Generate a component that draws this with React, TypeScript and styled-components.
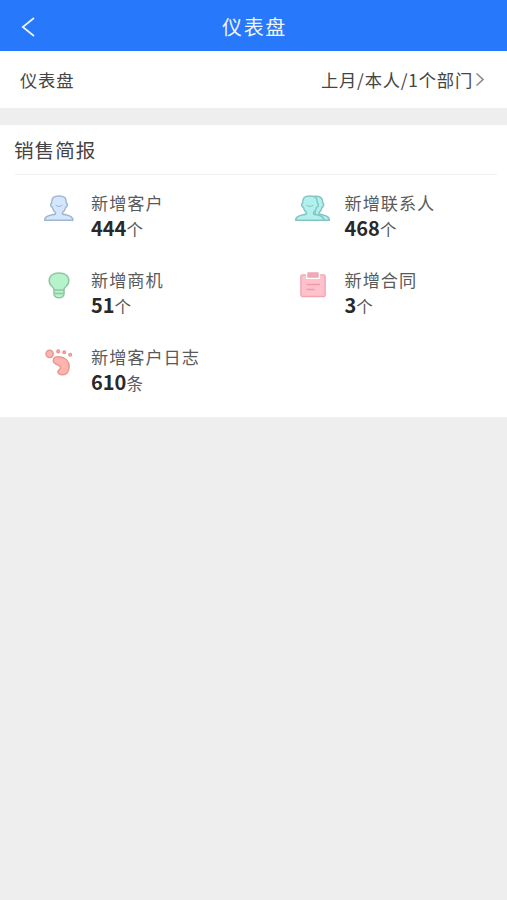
import React from 'react';
import styled, { createGlobalStyle } from 'styled-components';

const GlobalStyle = createGlobalStyle`
  * { box-sizing: border-box; }
  body {
    margin: 0;
    background: #eeeeee;
    color: #444;
    font-family: "Noto Sans CJK SC", sans-serif;
  }
  svg { display: block; }
`;

const Page = styled.div`
  min-height: 900px;
  background: #eeeeee;
`;

const Header = styled.header`
  display: grid;
  grid-template-columns: 60px 1fr 60px;
  align-items: center;
  height: 51px;
  padding-top: 3px;
  background: #2878fb;
  color: #eef5ff;
`;

const BackButton = styled.button`
  width: 40px;
  padding: 0 0 0 20px;
  border: 0;
  background: none;
  color: inherit;
`;

const Title = styled.h1`
  margin: 0;
  font-size: 20px;
  line-height: 28px;
  font-weight: 400;
  letter-spacing: 1.6px;
  text-align: center;
  padding-left: 2px;
`;

const FilterBar = styled.div`
  display: flex;
  align-items: center;
  justify-content: space-between;
  height: 57px;
  padding: 0 22px 0 20px;
  background: #fff;
  font-size: 17.3px;
  line-height: 26px;
  letter-spacing: 0.8px;
`;

const FilterValue = styled.div`
  display: flex;
  align-items: center;
  gap: 2px;
`;

const Card = styled.section`
  height: 292px;
  margin-top: 17px;
  background: #fff;
`;

const CardTitle = styled.h2`
  height: 50px;
  margin: 0 10px 0 15px;
  border-bottom: 1px solid #f0f0f0;
  font-size: 19.6px;
  line-height: 49px;
  font-weight: 400;
  letter-spacing: 1px;
  text-indent: -1px;
`;

const Grid = styled.div`
  display: grid;
  grid-template-columns: 253.5px 253.5px;
  grid-auto-rows: 76.8px;
  padding-top: 15px;
`;

const Item = styled.div`
  display: grid;
  grid-template-columns: 91px 1fr;
`;

const IconBox = styled.div<{ $left: number }>`
  padding: 4px 0 0 ${(p) => p.$left}px;
`;

const Label = styled.div`
  font-size: 17.2px;
  line-height: 26px;
  letter-spacing: 0.95px;
  color: #5a5a5a;
  white-space: nowrap;
`;

const Value = styled.div`
  font-size: 16.5px;
  line-height: 23.5px;
  color: #5a5a5a;
`;

const Amount = styled.b`
  font-size: 20px;
  font-weight: 700;
  color: #292929;
`;

const bustPath =
  'M8.6 9C8.6 3.6 10.4 2 16 2C21.6 2 23.4 3.6 23.4 9C25 9.3 24.6 13 22.6 13.3C22 16 21 17.5 19.6 18.3V20C22 21.3 30 20.8 30 26.3H1.6C1.6 20.8 10 21.3 12.4 20V18.3C11 17.5 10 16 9.4 13.3C7.4 13 7 9.3 8.6 9Z';

const CustomerIcon = () => (
  <svg width="32" height="28" viewBox="0 0 32 28" fill="#d4e6fb" stroke="#a0b6d3" strokeWidth="1.5" strokeLinejoin="round">
    <path d={bustPath} />
    <path d="M12.6 11.3Q16 13.8 19.4 11.3" fill="none" strokeWidth="1" />
  </svg>
);

const ContactIcon = () => (
  <svg width="37" height="28" viewBox="0 0 37 28" fill="#b2f0ed" stroke="#84c5c2" strokeWidth="1.5" strokeLinejoin="round">
    <path d="M19 2.6C25 1.2 28.8 3 28.8 9C30.2 9.4 29.8 13 28 13.3C27.4 16 26.4 17.5 25.2 18.3V20C27.6 21.3 35.4 20.8 35.4 26.3H22Z" />
    <path d={bustPath} />
    <path d="M12.6 11.3Q16 13.8 19.4 11.3" fill="none" strokeWidth="1" />
  </svg>
);

const BulbIcon = () => (
  <svg width="22" height="28" viewBox="0 0 22 28" fill="#b5f3ca" stroke="#92c5a4" strokeWidth="1.6" strokeLinejoin="round">
    <path d="M6 18.3Q5.8 16.9 3.5 15Q1.2 13 1.2 10C1.2 5 5 2 11 2S20.8 5 20.8 10Q20.8 13 18.5 15Q16.2 16.9 16 18.3V23Q15.5 26.8 11 26.8Q6.5 26.8 6 23Z" />
    <path d="M6 19H16M7 22.5H15" fill="none" strokeWidth="1.3" />
  </svg>
);

const ContractIcon = () => (
  <svg width="26" height="28" viewBox="0 0 26 28" fill="#ffc2cd" stroke="#efa6b2" strokeWidth="1.4" strokeLinejoin="round">
    <rect x=".9" y="3.9" width="24.2" height="21.6" rx="1.5" />
    <path d="M7 2H19V7H7Z" fill="#f4aab6" stroke="#fff" strokeWidth="2.2" />
    <path d="M8 2H18V6H8Z" fill="#f4aab6" />
    <path d="M6.5 13.5H20M6.5 18.5H14.5" fill="none" stroke="#ea9caa" strokeWidth="1.4" />
  </svg>
);

const FootIcon = () => (
  <svg width="28" height="29" viewBox="0 0 28 29" fill="#ffb4ae" stroke="#ea9792" strokeWidth="1.5">
    <circle cx="4.6" cy="5.8" r="3.6" />
    <circle cx="13.2" cy="3.4" r="1.3" />
    <circle cx="19.2" cy="4.2" r="1.3" />
    <circle cx="25.2" cy="6.8" r="1.3" />
    <path d="M8.3 12.4C8.3 9.5 11 8.2 14.3 8.8C20.5 9.5 24.3 13.3 24.2 18.6C24 24.2 21.2 27.2 17 26.7Q12.6 26.2 13 23.5C13.3 21.8 16.3 21.5 15.5 19C14.6 16.6 8.4 16.6 8.3 12.4Z" />
  </svg>
);

const items = [
  { label: '新增客户', amount: '444', unit: '个', left: 43, icon: <CustomerIcon /> },
  { label: '新增联系人', amount: '468', unit: '个', left: 40, icon: <ContactIcon /> },
  { label: '新增商机', amount: '51', unit: '个', left: 48, icon: <BulbIcon /> },
  { label: '新增合同', amount: '3', unit: '个', left: 46, icon: <ContractIcon /> },
  { label: '新增客户日志', amount: '610', unit: '条', left: 45, icon: <FootIcon /> },
];

export default function App() {
  return (
    <Page>
      <GlobalStyle />
      <Header>
        <BackButton aria-label="返回">
          <svg width="16" height="22" viewBox="0 0 16 22" fill="none" stroke="currentColor" strokeWidth="1.7">
            <path d="M14 2L2.8 11L14 20" />
          </svg>
        </BackButton>
        <Title>仪表盘</Title>
      </Header>
      <FilterBar>
        <span>仪表盘</span>
        <FilterValue>
          <span>上月/本人/1个部门</span>
          <svg width="10" height="15" viewBox="0 0 10 15" fill="none" stroke="#888" strokeWidth="1.6">
            <path d="M1.5 1.5L8 7.5L1.5 13.5" />
          </svg>
        </FilterValue>
      </FilterBar>
      <Card>
        <CardTitle>销售简报</CardTitle>
        <Grid>
          {items.map((item) => (
            <Item key={item.label}>
              <IconBox $left={item.left}>{item.icon}</IconBox>
              <div>
                <Label>{item.label}</Label>
                <Value>
                  <Amount>{item.amount}</Amount>
                  {item.unit}
                </Value>
              </div>
            </Item>
          ))}
        </Grid>
      </Card>
    </Page>
  );
}
